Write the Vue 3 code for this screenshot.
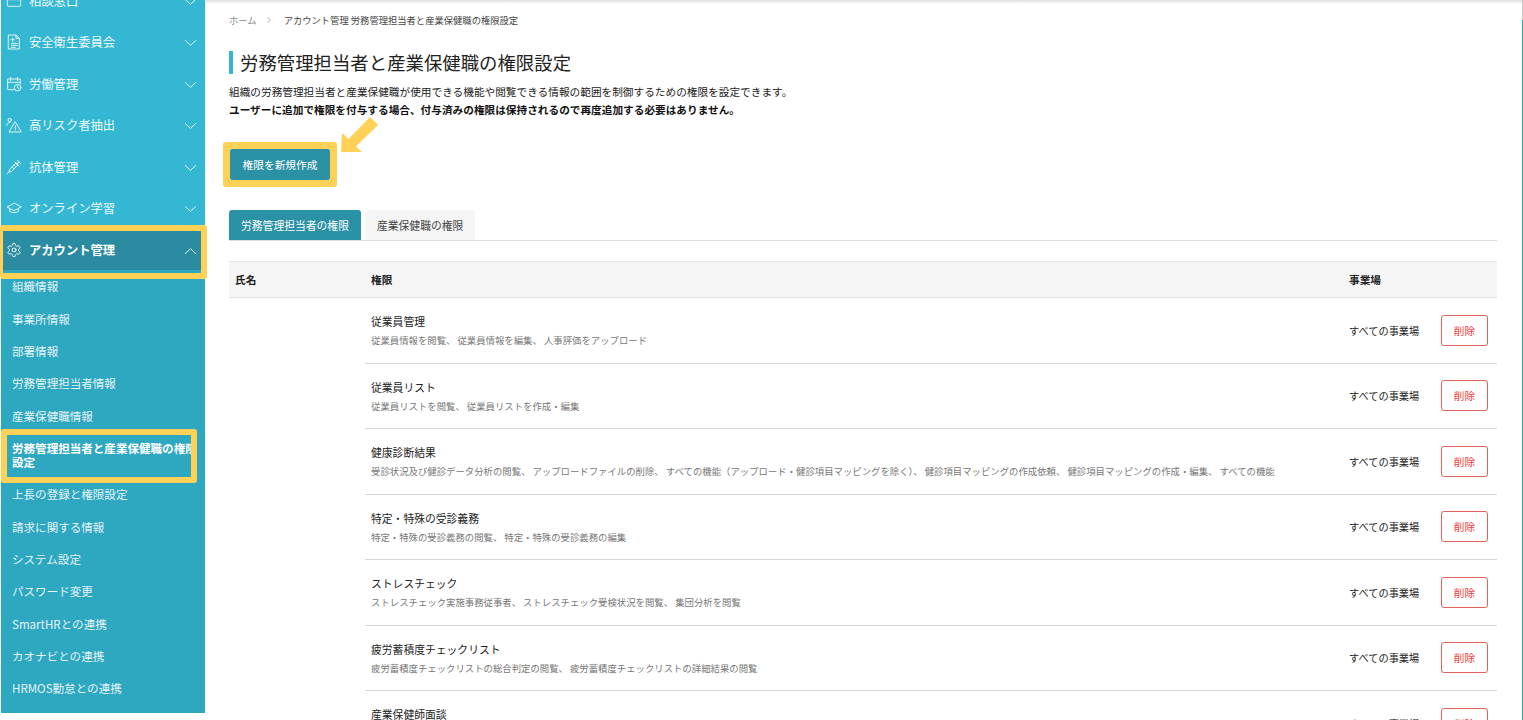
<template>
  <div class="page">
    <aside class="side">
      <div class="side-inner">
        <div v-for="item in navItems" :key="item.name" class="nav-row" :class="{ open: item.open }">
          <svg class="nav-icon" viewBox="0 0 24 24" fill="none" stroke="currentColor" stroke-width="1.4" stroke-linecap="round" stroke-linejoin="round">
            <template v-if="item.icon === 'inbox'">
              <rect x="2" y="4" width="20" height="16" rx="2" />
              <path d="M2 10h20" />
            </template>
            <template v-if="item.icon === 'doc'">
              <path d="M4 1.5h11l5 5v16H4z" />
              <path d="M15 1.5v5h5M10 6v5M7.5 8.5h5M8 14h9M8 17h9M8 20h6" />
            </template>
            <template v-if="item.icon === 'calendar'">
              <path d="M12 20.5H2.5V4.5h19v7" />
              <path d="M2.5 9.5h19M7 2v5M17 2v5" />
              <circle cx="17.5" cy="17.5" r="5" />
              <path d="M17.5 15v2.7l1.8 1" />
            </template>
            <template v-if="item.icon === 'risk'">
              <circle cx="5.5" cy="4.5" r="2.5" />
              <path d="M1 13c0-3 2-5 5-5" />
              <path d="M14 7.5l9 15H5z" />
              <path d="M14 13v4.5M14 19.5v.3" />
            </template>
            <template v-if="item.icon === 'syringe'">
              <path d="M17 2l5 5M19.5 4.5L16 8M13.5 4.5l6 6M15 6L5.5 15.5l-1 4 4-1L18 9M4.5 19.5L1.5 22.5M9 12l2 2M12 9l2 2" />
            </template>
            <template v-if="item.icon === 'cap'">
              <path d="M12 5L1.5 10.5 12 16l10.5-5.500z" />
              <path d="M5.500 13v4c2 2.500 11 2.500 13 0v-4" />
            </template>
            <template v-if="item.icon === 'gear'">
              <path d="M12.220 2h-.440a2 2 0 0 0-2 2v.180a2 2 0 0 1-1 1.730l-.430.250a2 2 0 0 1-2 0l-.150-.080a2 2 0 0 0-2.730.730l-.220.380a2 2 0 0 0 .730 2.730l.150.100a2 2 0 0 1 1 1.720v.510a2 2 0 0 1-1 1.740l-.150.090a2 2 0 0 0-.730 2.730l.220.380a2 2 0 0 0 2.730.730l.150-.080a2 2 0 0 1 2 0l.430.250a2 2 0 0 1 1 1.730V20a2 2 0 0 0 2 2h.440a2 2 0 0 0 2-2v-.180a2 2 0 0 1 1-1.730l.430-.250a2 2 0 0 1 2 0l.150.080a2 2 0 0 0 2.730-.730l.220-.390a2 2 0 0 0-.730-2.730l-.150-.080a2 2 0 0 1-1-1.740v-.500a2 2 0 0 1 1-1.740l.150-.090a2 2 0 0 0 .730-2.730l-.220-.380a2 2 0 0 0-2.730-.730l-.150.080a2 2 0 0 1-2 0l-.430-.250a2 2 0 0 1-1-1.730V4a2 2 0 0 0-2-2z" />
              <circle cx="12" cy="12" r="3" />
            </template>
          </svg>
          <span class="nav-label">{{ item.name }}</span>
          <svg class="chevron" viewBox="0 0 14 8" fill="none" stroke="currentColor" stroke-width="1">
            <path v-if="item.open" d="M1 7l6-5.500 6 5.500" />
            <path v-else d="M1 1l6 5.500 6-5.500" />
          </svg>
          <div v-if="item.open" class="mark mark-nav"></div>
        </div>
        <div class="sub-list">
          <div v-for="sub in subItems" :key="sub.name" class="sub-row" :class="{ current: sub.current }">
            {{ sub.name }}
            <div v-if="sub.current" class="mark mark-sub"></div>
          </div>
        </div>
      </div>
    </aside>

    <main class="main">
      <div class="crumbs">
        <span class="crumb-home">ホーム</span>
        <svg class="crumb-sep" viewBox="0 0 6 8" fill="none" stroke="#999" stroke-width="0.8"><path d="M1.500 1l3 3-3 3" /></svg>
        <span>アカウント管理 労務管理担当者と産業保健職の権限設定</span>
      </div>

      <h1 class="title">労務管理担当者と産業保健職の権限設定</h1>

      <div class="desc">
        <p>組織の労務管理担当者と産業保健職が使用できる機能や閲覧できる情報の範囲を制御するための権限を設定できます。</p>
        <p class="strong">ユーザーに追加で権限を付与する場合、付与済みの権限は保持されるので再度追加する必要はありません。</p>
      </div>

      <div class="create-wrap">
        <div class="create-mark">
          <button class="create-btn">権限を新規作成</button>
        </div>
        <svg class="arrow" viewBox="0 0 40 38">
          <path fill="#ffd257" d="M1 36L2 17l6.500 6L30 1l8 8-22 21.500 6 5.500z" />
        </svg>
      </div>

      <div class="tabs">
        <div class="tab active">労務管理担当者の権限</div>
        <div class="tab">産業保健職の権限</div>
      </div>

      <div class="thead">
        <div class="th-name">氏名</div>
        <div class="th-perm">権限</div>
        <div class="th-site">事業場</div>
      </div>
      <div class="tbody">
        <div v-for="row in rows" :key="row.title" class="row">
          <div class="perm">
            <div class="perm-title">{{ row.title }}</div>
            <div class="perm-desc">{{ row.desc }}</div>
          </div>
          <div class="site">すべての事業場</div>
          <button class="del-btn">削除</button>
        </div>
      </div>
    </main>

    <div class="edge"></div>
  </div>
</template>

<script setup>
const navItems = [
  { name: '相談窓口', icon: 'inbox' },
  { name: '安全衛生委員会', icon: 'doc' },
  { name: '労働管理', icon: 'calendar' },
  { name: '高リスク者抽出', icon: 'risk' },
  { name: '抗体管理', icon: 'syringe' },
  { name: 'オンライン学習', icon: 'cap' },
  { name: 'アカウント管理', icon: 'gear', open: true }
]

const subItems = [
  { name: '組織情報' },
  { name: '事業所情報' },
  { name: '部署情報' },
  { name: '労務管理担当者情報' },
  { name: '産業保健職情報' },
  { name: '労務管理担当者と産業保健職の権限設定', current: true },
  { name: '上長の登録と権限設定' },
  { name: '請求に関する情報' },
  { name: 'システム設定' },
  { name: 'パスワード変更' },
  { name: 'SmartHRとの連携' },
  { name: 'カオナビとの連携' },
  { name: 'HRMOS勤怠との連携' }
]

const rows = [
  { title: '従業員管理', desc: '従業員情報を閲覧、 従業員情報を編集、 人事評価をアップロード' },
  { title: '従業員リスト', desc: '従業員リストを閲覧、 従業員リストを作成・編集' },
  { title: '健康診断結果', desc: '受診状況及び健診データ分析の閲覧、 アップロードファイルの削除、 すべての機能（アップロード・健診項目マッピングを除く）、 健診項目マッピングの作成依頼、 健診項目マッピングの作成・編集、 すべての機能' },
  { title: '特定・特殊の受診義務', desc: '特定・特殊の受診義務の閲覧、 特定・特殊の受診義務の編集' },
  { title: 'ストレスチェック', desc: 'ストレスチェック実施事務従事者、 ストレスチェック受検状況を閲覧、 集団分析を閲覧' },
  { title: '疲労蓄積度チェックリスト', desc: '疲労蓄積度チェックリストの総合判定の閲覧、 疲労蓄積度チェックリストの詳細結果の閲覧' },
  { title: '産業保健師面談', desc: '' }
]
</script>

<style scoped>
.page {
  display: flex;
  width: 1523px;
  height: 720px;
  overflow: hidden;
  background: #fff;
  font-family: "Noto Sans CJK JP", "Liberation Sans", sans-serif;
  color: #222;
}

.side {
  flex: 0 0 204px;
  height: 713px;
  margin-left: 1px;
  background: #2ea7c0;
}

.side-inner {
  margin-top: -20.25px;
}

.nav-row {
  position: relative;
  display: flex;
  align-items: center;
  height: 41.5px;
  padding: 0 8px 0 5px;
  background: #33b7d3;
  color: #eef9fb;
}

.nav-row.open {
  background: #2b8ba0;
  color: #fff;
  font-weight: 700;
}

.nav-icon {
  flex: 0 0 16px;
  width: 16px;
  height: 16px;
}

.nav-label {
  flex: 1;
  margin-left: 7px;
  font-size: 12.3px;
}

.chevron {
  width: 13px;
  height: 8px;
  margin-top: 2px;
}

.sub-row {
  position: relative;
  display: flex;
  align-items: center;
  min-height: 32.3px;
  padding: 0 6px 0 11px;
  font-size: 11.55px;
  line-height: 14px;
  color: #e4f4f7;
}

.sub-row.current {
  min-height: 46.5px;
  color: #fff;
  font-weight: 700;
}

.mark {
  position: absolute;
  box-sizing: border-box;
  border: 6px solid #ffd257;
  border-radius: 3px;
}

.mark-nav {
  top: -4px;
  left: -1px;
  width: 207px;
  height: 54px;
  border-left-width: 3px;
}

.mark-sub {
  top: -3px;
  left: 0;
  width: 196px;
  height: 54px;
}

.main {
  flex: 1;
  min-width: 0;
  padding: 13px 25px 0 24px;
  background: linear-gradient(#e0e0e0, #fff 4px);
}

.crumbs {
  display: flex;
  align-items: center;
  height: 14px;
  font-size: 9.3px;
  color: #444;
}

.crumb-home {
  color: #8a8a8a;
}

.crumb-sep {
  width: 6px;
  height: 8px;
  margin: 0 12px 0 9px;
}

.title {
  margin: 24px 0 0;
  height: 23px;
  padding-left: 7px;
  border-left: 4px solid #33b7d3;
  font-size: 18.4px;
  line-height: 23px;
  font-weight: 400;
  color: #222;
}

.desc {
  margin-top: 9px;
  font-size: 10.66px;
  line-height: 18px;
  color: #222;
}

.desc p {
  margin: 0;
}

.desc .strong {
  font-weight: 700;
  color: #111;
}

.create-wrap {
  position: relative;
  margin: 23px 0 0 -6px;
  height: 45px;
}

.create-mark {
  display: inline-block;
  border: 7px solid #ffd257;
  border-radius: 3px;
}

.create-btn {
  display: block;
  width: 100px;
  height: 31px;
  padding: 0;
  border: none;
  border-radius: 2px;
  background: #2b91a5;
  color: #fff;
  font-family: inherit;
  font-size: 10.7px;
}

.arrow {
  position: absolute;
  left: 117px;
  top: -26px;
  width: 40px;
  height: 38px;
}

.tabs {
  display: flex;
  gap: 4px;
  margin-top: 23px;
  border-bottom: 1px solid #ddd;
}

.tab {
  height: 30px;
  padding: 0 12px;
  border-radius: 3px 3px 0 0;
  background: #f5f5f5;
  font-size: 10.8px;
  line-height: 30px;
  color: #444;
}

.tab.active {
  background: #2b91a5;
  color: #fff;
}

.thead {
  display: flex;
  align-items: center;
  box-sizing: border-box;
  height: 37px;
  margin-top: 20px;
  background: #f5f5f5;
  border-top: 1px solid #e6e6e6;
  border-bottom: 1px solid #dfe3e8;
  font-size: 10.66px;
  font-weight: 700;
  color: #222;
}

.th-name {
  width: 136px;
  padding-left: 6px;
  box-sizing: border-box;
}

.th-perm {
  flex: 1;
  padding-left: 6px;
}

.th-site {
  width: 154px;
  padding-left: 6px;
  box-sizing: border-box;
}

.tbody {
  padding-left: 136px;
}

.row {
  display: flex;
  align-items: center;
  box-sizing: border-box;
  height: 65.5px;
  padding: 0 9px 0 6px;
  border-bottom: 1px solid #d8d8d8;
}

.perm {
  flex: 1;
  min-width: 0;
}

.perm-title {
  font-size: 10.8px;
  line-height: 16px;
  color: #222;
}

.perm-desc {
  margin-top: 4px;
  height: 14px;
  font-size: 9.4px;
  line-height: 14px;
  color: #777;
}

.site {
  width: 92px;
  font-size: 10.2px;
  color: #222;
}

.del-btn {
  width: 47px;
  height: 31px;
  padding: 0;
  background: #fff;
  border: 1px solid #e8605a;
  border-radius: 3px;
  color: #ee3b3b;
  font-family: inherit;
  font-size: 10.66px;
}

.edge {
  flex: 0 0 1px;
  background: linear-gradient(#c8c8c8 0, #c8c8c8 20px, #2ea7c0 20px);
}
</style>

<style>
html, body {
  margin: 0;
  background: #fff;
}
</style>
